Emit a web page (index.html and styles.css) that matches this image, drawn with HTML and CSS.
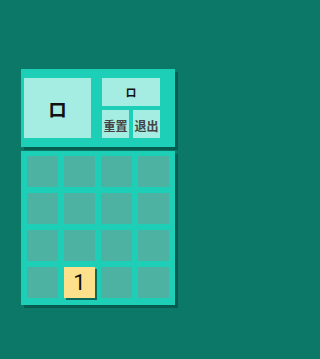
FILE: index.html
```html
<!DOCTYPE html>
<html>
<head>
<meta charset="utf-8">
<link rel="stylesheet" href="styles.css">
</head>
<body>
<div class="app">
  <div class="panel top">
    <div class="score">ロ</div>
    <div class="side">
      <div class="best">ロ</div>
      <div class="btns">
        <div class="btn">重置</div>
        <div class="btn">退出</div>
      </div>
    </div>
  </div>
  <div class="panel board">
    <div class="cell"></div><div class="cell"></div><div class="cell"></div><div class="cell"></div>
    <div class="cell"></div><div class="cell"></div><div class="cell"></div><div class="cell"></div>
    <div class="cell"></div><div class="cell"></div><div class="cell"></div><div class="cell"></div>
    <div class="cell"></div><div class="cell tile">1</div><div class="cell"></div><div class="cell"></div>
  </div>
</div>
</body>
</html>
```
FILE: styles.css
```css
html, body {
  margin: 0;
  padding: 0;
  background: #0c7868;
  height: 100%;
}
body {
  font-family: "Noto Sans CJK SC", "DejaVu Sans", sans-serif;
}
.app {
  padding: 69px 0 0 21px;
  display: flex;
  flex-direction: column;
  gap: 4px;
}
.panel {
  width: 154px;
  background: #1ecfb8;
  box-shadow: 3px 3px 0 #065c50;
  box-sizing: border-box;
}
.top {
  height: 78px;
  padding: 9px 15px 9px 3px;
  display: flex;
  gap: 11px;
}
.score {
  width: 67px;
  height: 60px;
  background: #a5ece3;
  display: flex;
  align-items: center;
  justify-content: center;
  font-family: "Noto Sans CJK JP", sans-serif;
  font-weight: bold;
  font-size: 19px;
  color: #111;
}
.side {
  width: 58px;
  display: flex;
  flex-direction: column;
  gap: 4px;
}
.best {
  height: 28px;
  background: #a5ece3;
  display: flex;
  align-items: center;
  justify-content: center;
  font-family: "Noto Sans CJK JP", sans-serif;
  font-weight: bold;
  font-size: 11px;
  color: #111;
}
.btns {
  display: flex;
  gap: 4px;
  height: 28px;
}
.btn {
  width: 27px;
  background: #a5ece3;
  display: flex;
  align-items: center;
  justify-content: center;
  padding-top: 2px;
  box-sizing: border-box;
  font-size: 12px;
  font-weight: bold;
  color: #444;
  white-space: nowrap;
}
.board {
  height: 154px;
  padding: 5px 6px 7px;
  display: grid;
  grid-template-columns: repeat(4, 31px);
  grid-template-rows: repeat(4, 31px);
  gap: 6px;
}
.cell {
  background: #4db2a2;
}
.tile {
  background: #fde08b;
  box-shadow: 2px 2px 0 #0a6a5c;
  display: flex;
  align-items: center;
  justify-content: center;
  font-family: Roboto, "Noto Sans", sans-serif;
  font-size: 22px;
  color: #111;
}
```
